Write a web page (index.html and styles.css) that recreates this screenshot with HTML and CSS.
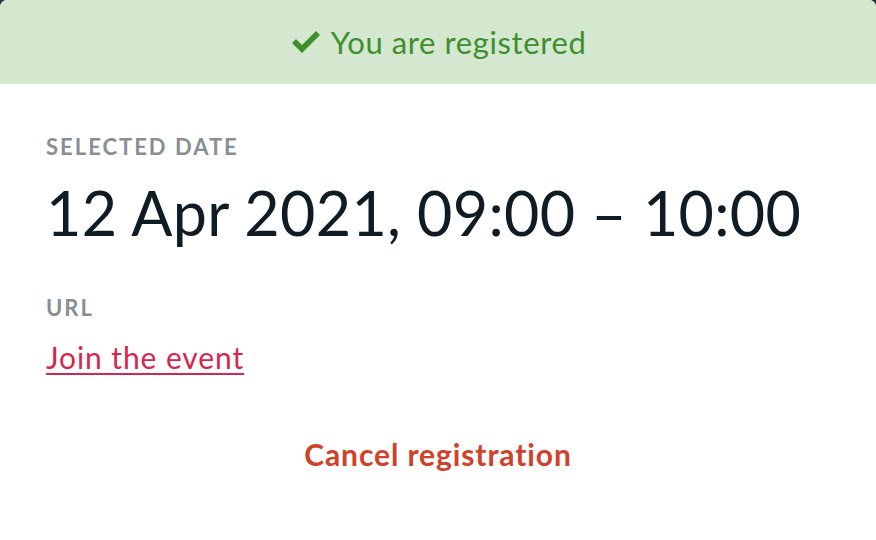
FILE: index.html
```html
<!DOCTYPE html>
<html>
<head>
<meta charset="utf-8">
<link rel="stylesheet" href="styles.css">
</head>
<body>
<div class="card">
  <div class="banner">
    <svg class="check" viewBox="0 0 32 26" width="32" height="26"><path d="M2 14 L6 10 L12 16 L26 2 L30 6 L12 24 Z" fill="#3f8f2e"/></svg>
    <span>You are registered</span>
  </div>
  <div class="body">
    <div class="label">SELECTED DATE</div>
    <div class="date">12 Apr 2021, 09:00 – 10:00</div>
    <div class="label url-label">URL</div>
    <a class="link" href="#">Join the event</a>
    <div class="actions"><button class="cancel">Cancel registration</button></div>
  </div>
</div>
</body>
</html>
```
FILE: styles.css
```css
html, body { margin: 0; padding: 0; height: 100%; }
body { background: #2c2c4c; font-family: Lato, "Open Sans", sans-serif; }
.card { background: #fff; height: 540px; border-radius: 7px 7px 0 0; overflow: hidden; }
.banner { height: 84px; background: #d4e7cf; color: #3f8f2e; display: flex; align-items: center; justify-content: center; gap: 9px; font-size: 31px; letter-spacing: 0.6px; }
.check { width: 32px; height: 26px; }
.body { padding: 48px 46px 0; }
.label { color: #878f94; font-weight: 700; font-size: 22px; line-height: 30px; letter-spacing: 2px; }
.date { color: #0f1c24; font-size: 61px; line-height: 70px; margin-top: 16px; letter-spacing: 0.3px; }
.url-label { margin-top: 45px; }
.link { display: inline-block; color: #d6264f; font-size: 30px; line-height: 34px; margin-top: 17px; letter-spacing: 0.9px; text-decoration: underline; text-decoration-thickness: 2px; text-underline-offset: 4px; }
.actions { display: flex; justify-content: center; margin-top: 62px; }
.cancel { background: none; border: 0; padding: 0; font-family: inherit; color: #d0402b; font-weight: 700; font-size: 30px; letter-spacing: 0.9px; cursor: pointer; }
```
